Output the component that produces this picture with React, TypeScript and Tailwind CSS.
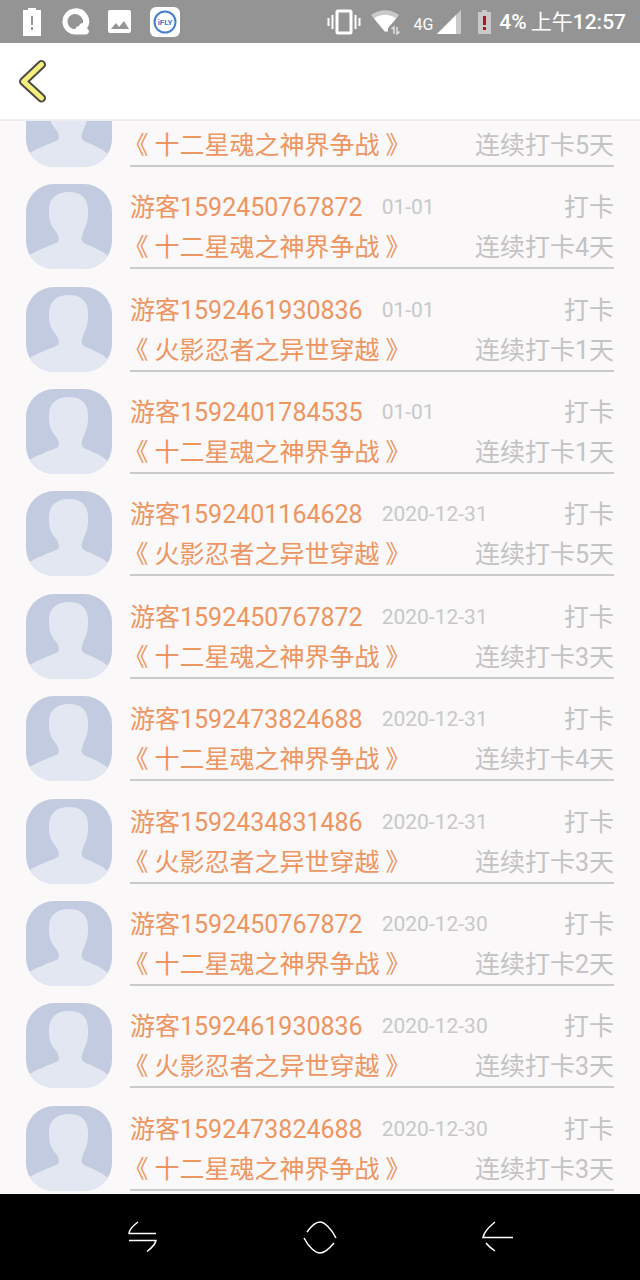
type CheckIn = {
  user: string;
  date: string;
  book: string;
  days: number;
};

const STAR = "十二星魂之神界争战";
const FIRE = "火影忍者之异世穿越";

const checkIns: CheckIn[] = [
  { user: "游客1592473824688", date: "01-01", book: STAR, days: 5 },
  { user: "游客1592450767872", date: "01-01", book: STAR, days: 4 },
  { user: "游客1592461930836", date: "01-01", book: FIRE, days: 1 },
  { user: "游客1592401784535", date: "01-01", book: STAR, days: 1 },
  { user: "游客1592401164628", date: "2020-12-31", book: FIRE, days: 5 },
  { user: "游客1592450767872", date: "2020-12-31", book: STAR, days: 3 },
  { user: "游客1592473824688", date: "2020-12-31", book: STAR, days: 4 },
  { user: "游客1592434831486", date: "2020-12-31", book: FIRE, days: 3 },
  { user: "游客1592450767872", date: "2020-12-30", book: STAR, days: 2 },
  { user: "游客1592461930836", date: "2020-12-30", book: FIRE, days: 3 },
  { user: "游客1592473824688", date: "2020-12-30", book: STAR, days: 3 },
];

function StatusBar() {
  return (
    <div className="flex h-[43px] shrink-0 items-center justify-between bg-[#949494] pl-[22px] pr-[14px] text-white">
      <div className="flex items-center gap-[18px]">
        <svg width="20" height="30" viewBox="0 0 20 30" fill="none">
          <path d="M6 1h8v2h5v26H1V3h5z" fill="#fff" />
          <path d="M10 9v9M10 20v3" stroke="#949494" strokeWidth="2" />
        </svg>
        <svg width="30" height="30" viewBox="0 0 30 30" fill="none">
          <path
            d="M14.500 1.500a13 13 0 1 0 2 26h9c4 0 4.500-4.500 1.500-6a13 13 0 0 0-12.500-20z"
            fill="#fff"
          />
          <path
            d="M14.500 7a7.500 7.500 0 1 0 1 15c0-2 2-3 3.500-3 .5-2 2-3 4-3a8 8 0 0 0-8.500-9z"
            fill="#949494"
          />
        </svg>
        <svg width="24" height="24" viewBox="0 0 24 24" fill="none">
          <rect x="0" y="0" width="23" height="23" rx="2" fill="#fff" />
          <path d="M3 19l5-6 3 4 5-6 5 8z" fill="#949494" />
        </svg>
        <svg width="30" height="30" viewBox="0 0 30 30" fill="none">
          <rect width="30" height="30" rx="6" fill="#fff" />
          <circle cx="15" cy="15" r="10.500" stroke="#4680cc" strokeWidth="2" />
          <text
            x="15"
            y="18"
            textAnchor="middle"
            fontSize="8"
            fontWeight="700"
            fontFamily="Roboto, sans-serif"
            fill="#3f7ac8"
          >
            iFLY
          </text>
        </svg>
      </div>

      <div className="flex items-center">
        <svg width="34" height="26" viewBox="0 0 34 26" fill="none" stroke="#fff">
          <rect x="10" y="2" width="14" height="22" rx="1" strokeWidth="3" />
          <path d="M5.500 6v14M28.500 6v14" strokeWidth="2" />
          <path d="M1.500 9v8M32.500 9v8" strokeWidth="2" />
        </svg>
        <svg
          className="ml-[10px]"
          width="30"
          height="26"
          viewBox="0 0 30 26"
          fill="none"
        >
          <path d="M0 6C8-.5 20-.5 28 6l-3 4-11 13z" fill="#c9c9c9" />
          <path d="M3 9.500c7-5 15-5 22 0L17 19v3.500h-3z" fill="#fff" />
          <path
            d="M19.500 19l3-2.500v8M28 21.500l-2.500 3.500v-7"
            stroke="#949494"
            strokeWidth="4"
          />
          <path
            d="M20.500 20l2.500-2v7M28.500 22.500L26 25v-7"
            stroke="#e2e2e2"
            strokeWidth="1.500"
          />
        </svg>
        <span className="ml-[12px] mt-[6px] text-base">4G</span>
        <svg
          className="ml-[4px]"
          width="25"
          height="24"
          viewBox="0 0 25 24"
          fill="none"
        >
          <path d="M24 0v24H0z" fill="#c9c9c9" />
          <path d="M19 5v19H0z" fill="#fff" />
        </svg>
        <svg
          className="ml-[16px]"
          width="13"
          height="24"
          viewBox="0 0 13 24"
          fill="none"
        >
          <path d="M4 0h5v2h4v22H0V2h4z" fill="#c9c9c9" />
          <path d="M6.500 6v9M6.500 17v3" stroke="#b3151b" strokeWidth="3" />
        </svg>
        <span className="ml-[8px] text-[21px] font-medium leading-[30px]">
          4%
        </span>
        <span className="ml-[4px] text-[21px] leading-[30px]">
          上午<span className="font-medium">12:57</span>
        </span>
      </div>
    </div>
  );
}

function Header() {
  return (
    <header className="relative z-10 flex h-[78px] shrink-0 items-center border-b-2 border-[#ececec] bg-white pl-[18px]">
      <button type="button" aria-label="返回">
        <svg width="30" height="44" viewBox="0 0 30 44" fill="none">
          <path
            d="M23.500 5.500L5.500 22.500L23.500 39"
            stroke="#4a4a46"
            strokeWidth="9"
            strokeLinecap="round"
            strokeLinejoin="round"
          />
          <path
            d="M23.500 5.500L5.500 22.500L23.500 39"
            stroke="#f7ef7c"
            strokeWidth="5"
            strokeLinecap="round"
            strokeLinejoin="round"
          />
        </svg>
      </button>
    </header>
  );
}

function Avatar() {
  return (
    <svg
      className="shrink-0 rounded-[28px]"
      width="86"
      height="85"
      viewBox="0 0 86 85"
    >
      <rect width="86" height="85" fill="#c2cbe0" />
      <path
        d="M43 8C30 8 23 15 23 26c0 6 0 10 2 14 2 5 5 7 7 11 1 3 1 5 0 7-3 2-8 3-14 6C10 67 4 70 0 75v10h86V77c-4-6-10-10-17-13-6-3-11-4-13-7-1-3 0-5 1-8 1-4 3-6 4-11 1-4 1-7 1-12C62 15 56 8 43 8z"
        fill="#e2e7f1"
      />
    </svg>
  );
}

function CheckInRow({ user, date, book, days }: CheckIn) {
  return (
    <li className="flex grow items-start gap-[18px] px-[26px] pt-[14px]">
      <Avatar />
      <div className="flex min-w-0 flex-1 flex-col gap-[3px] border-b-2 border-[#c9cacb] pb-px pt-[5px] text-[25px] leading-[37px]">
        <div className="flex items-center">
          <span className="text-[#ee9561]">{user}</span>
          <span className="ml-[19px] text-[21px] text-[#c8c8c8]">{date}</span>
          <span className="ml-auto text-[#c3c3c3]">打卡</span>
        </div>
        <div className="flex items-center justify-between">
          <a
            href="#"
            className="flex gap-[6px] pl-[6px] text-[#ee9561] [font-feature-settings:'halt']"
          >
            <span>《</span>
            <span>{book}</span>
            <span>》</span>
          </a>
          <span className="text-[#c3c3c3]">连续打卡{days}天</span>
        </div>
      </div>
    </li>
  );
}

function NavBar() {
  return (
    <nav className="flex h-[86px] shrink-0 items-center justify-between bg-black px-[126px]">
      <button type="button" aria-label="最近任务">
        <svg width="32" height="34" viewBox="0 0 32 34" fill="none" stroke="#fff" strokeWidth="1.500">
          <path d="M12 2C8 5 3 9 3 13.500h27M3 20.500h27c-1 4-5 8-9 11" />
        </svg>
      </button>
      <button type="button" aria-label="主屏幕">
        <svg width="36" height="36" viewBox="0 0 36 36" fill="none" stroke="#fff" strokeWidth="1.500">
          <path d="M5 13C10 6 14 3 18 3s11 6 16 16M2 19c5 10 12 15 16 15s9-4 14-10" />
        </svg>
      </button>
      <button type="button" aria-label="返回上一页">
        <svg width="32" height="34" viewBox="0 0 32 34" fill="none" stroke="#fff" strokeWidth="1.500">
          <path d="M13 2C8 6 2 12 1 17.500h30M4 23c3 4 6 6 9 8" />
        </svg>
      </button>
    </nav>
  );
}

export default function App() {
  return (
    <div className="flex h-screen flex-col bg-[#faf8f9] font-[Roboto,'Noto_Sans_CJK_SC',sans-serif]">
      <StatusBar />
      <Header />
      <main className="flex min-h-0 flex-1 flex-col overflow-hidden">
        {/* list is scrolled so the first row sits partly under the header */}
        <ul className="-mt-[53px] flex grow flex-col">
          {checkIns.map((item, i) => (
            <CheckInRow key={i} {...item} />
          ))}
        </ul>
      </main>
      <NavBar />
    </div>
  );
}
